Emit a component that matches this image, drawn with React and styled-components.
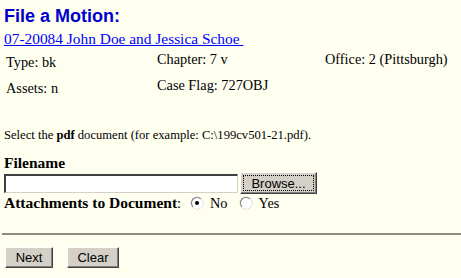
import React from 'react'
import styled, { createGlobalStyle } from 'styled-components'

const GlobalStyle = createGlobalStyle`
  html, body {
    margin: 0;
    padding: 0;
    background: #fffff0;
  }
  body {
    font-family: "Liberation Serif", "Times New Roman", serif;
    color: #000;
  }
`

const Page = styled.div`
  padding: 4px 0 0 4px;
  width: 457px;
  height: 274px;
  overflow: hidden;
`

const Title = styled.h1`
  margin: 0;
  font-family: "Liberation Sans", Arial, sans-serif;
  font-size: 18px;
  font-weight: bold;
  color: #0000cc;
  line-height: 24px;
`

const CaseLink = styled.a`
  display: inline-block;
  margin-top: 2px;
  font-size: 15.4px;
  line-height: 18px;
  color: #0000ff;
  text-decoration: underline;
  white-space: pre;
`

const InfoGrid = styled.div`
  display: grid;
  grid-template-columns: 151px 168px auto;
  row-gap: 3px;
  margin-top: 1px;
  padding-left: 2px;
  font-size: 14.3px;
  line-height: 20px;
`

const InfoCell = styled.div`
  padding-top: ${p => (p.low ? '3px' : '0')};
`

const Hint = styled.p`
  margin: 28px 0 0;
  font-size: 12.6px;
  line-height: 18px;
`

const Label = styled.div`
  margin-top: 10px;
  font-size: 15.5px;
  font-weight: bold;
  line-height: 17px;
`

const FileRow = styled.div`
  display: flex;
  align-items: center;
  gap: 2px;
  margin-top: 1px;
`

const FileInput = styled.div`
  box-sizing: border-box;
  width: 234px;
  height: 19px;
  background: #fff;
  border-top: 2px solid #404040;
  border-left: 2px solid #404040;
  border-right: 1px solid #d4d0c8;
  border-bottom: 1px solid #d4d0c8;
`

const Button = styled.button`
  box-sizing: border-box;
  height: ${p => p.h || 21}px;
  width: ${p => p.w}px;
  padding: 0;
  background: #d4d0c8;
  font-family: "Liberation Sans", Arial, sans-serif;
  font-size: 13px;
  color: #000;
  border: 1px solid;
  border-color: #fff #404040 #404040 #fff;
  box-shadow: inset -1px -1px #808080;
  ${p => p.focused && `
    outline: 1px dotted #000;
    outline-offset: -4px;
  `}
`

const RadioRow = styled.div`
  display: flex;
  align-items: center;
  font-size: 14.3px;
  line-height: 18px;
  margin-top: 0;
`

const Strong = styled.b`
  font-size: 15.5px;
`

const RadioLabel = styled.span`
  display: inline-flex;
  align-items: center;
  margin-left: ${p => p.gap}px;
  gap: 7px;
`

const Radio = styled.span`
  position: relative;
  display: inline-block;
  width: 12px;
  height: 12px;
  border-radius: 50%;
  background: #fff;
  border: 1px solid;
  border-color: #808080 #fff #fff #808080;
  box-shadow: 0 0 0 0.5px #c8c8c8;
  box-sizing: border-box;
  &::after {
    content: '';
    position: absolute;
    left: 3px;
    top: 3px;
    width: 4px;
    height: 4px;
    border-radius: 50%;
    background: ${p => (p.checked ? '#000' : 'transparent')};
  }
`

const Rule = styled.hr`
  margin: 21px 0 0 -2px;
  border: 0;
  border-top: 2px solid #8c8c80;
  height: 0;
`

const Actions = styled.div`
  display: flex;
  gap: 14px;
  margin-top: 12px;
  padding-left: 1px;
`

export default function App() {
  return (
    <Page>
      <GlobalStyle />
      <Title>File a Motion:</Title>
      <CaseLink href="#">07-20084 John Doe and Jessica Schoe </CaseLink>
      <InfoGrid>
        <InfoCell low>Type: bk</InfoCell>
        <InfoCell>Chapter: 7 v</InfoCell>
        <InfoCell>Office: 2 (Pittsburgh)</InfoCell>
        <InfoCell low>Assets: n</InfoCell>
        <InfoCell>Case Flag: 727OBJ</InfoCell>
        <InfoCell />
      </InfoGrid>
      <Hint>
        Select the <b>pdf</b> document (for example: C:\199cv501-21.pdf).
      </Hint>
      <Label>Filename</Label>
      <FileRow>
        <FileInput />
        <Button w={77} h={22} focused>Browse...</Button>
      </FileRow>
      <RadioRow>
        <Strong>Attachments to Document</Strong>:
        <RadioLabel gap={10}>
          <Radio checked />
          No
        </RadioLabel>
        <RadioLabel gap={12}>
          <Radio />
          Yes
        </RadioLabel>
      </RadioRow>
      <Rule />
      <Actions>
        <Button w={48}>Next</Button>
        <Button w={52}>Clear</Button>
      </Actions>
    </Page>
  )
}
